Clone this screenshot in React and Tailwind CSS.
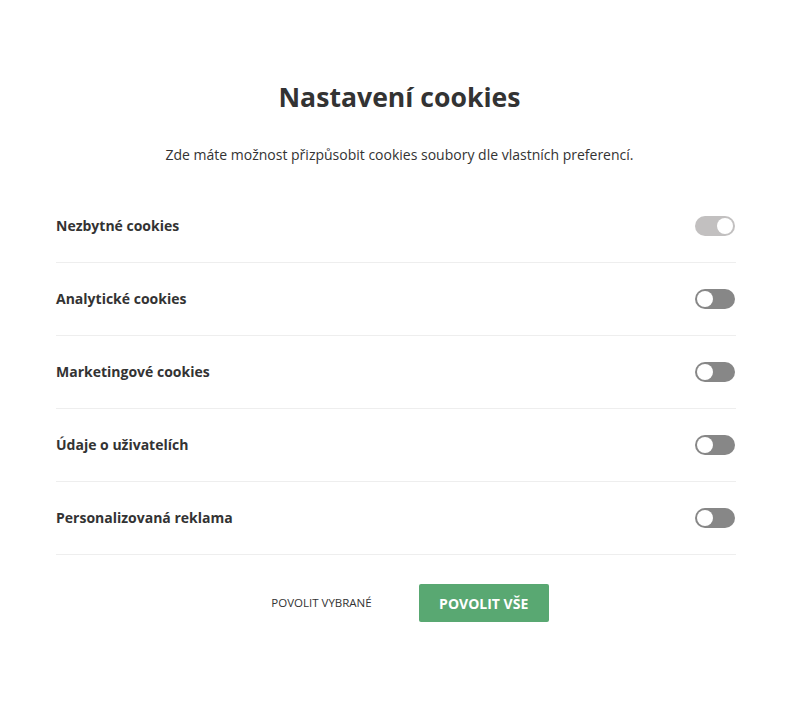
import React, { useState } from 'react';

const items = [
  { name: 'Nezbytné cookies', on: true, locked: true },
  { name: 'Analytické cookies', on: false },
  { name: 'Marketingové cookies', on: false },
  { name: 'Údaje o uživatelích', on: false },
  { name: 'Personalizovaná reklama', on: false },
];

function Toggle({ on, locked, onClick }) {
  const track = locked ? 'bg-[#c2c0c0]' : on ? 'bg-[#5aa872]' : 'bg-[#878787]';
  return (
    <button
      onClick={onClick}
      className={`relative mr-[1px] h-[20px] w-[40px] rounded-full ${track}`}
    >
      <span
        className={`absolute top-[2px] h-[16px] w-[16px] rounded-full bg-white ${on ? 'left-[22px]' : 'left-[2px]'}`}
      />
    </button>
  );
}

export default function App() {
  const [state, setState] = useState(items.map(i => i.on));

  return (
    <div className="min-h-[702px] bg-white pt-[80px] font-['Open_Sans',sans-serif] text-[#333]">
      <h1 className="text-center text-[26.6px] font-bold leading-[34px] text-[#333]">Nastavení cookies</h1>
      <p className="mt-[31px] text-center text-[14px] leading-[20px] text-[#333]">
        Zde máte možnost přizpůsobit cookies soubory dle vlastních preferencí.
      </p>
      <div className="ml-[56px] mt-[25px] w-[680px]">
        {items.map((item, i) => (
          <div key={item.name} className="flex h-[73px] items-center justify-between border-b border-[#eeeeee] pb-[1px]">
            <span className="text-[14px] font-bold text-[#333]">{item.name}</span>
            <Toggle
              on={state[i]}
              locked={item.locked}
              onClick={() => !item.locked && setState(s => s.map((v, j) => (j === i ? !v : v)))}
            />
          </div>
        ))}
      </div>
      <div className="mt-[29px] flex items-center justify-center gap-[47px] pl-[21px]">
        <button className="text-[11.5px] text-[#333] uppercase">Povolit vybrané</button>
        <button className="h-[38px] w-[130px] rounded-[2px] bg-[#59a872] text-[14px] font-bold text-white">
          POVOLIT VŠE
        </button>
      </div>
    </div>
  );
}
